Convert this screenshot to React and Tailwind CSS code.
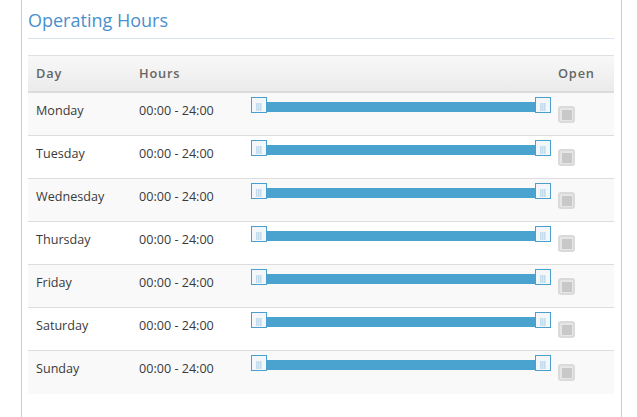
import React from "react";

const days = ["Monday", "Tuesday", "Wednesday", "Thursday", "Friday", "Saturday", "Sunday"];

function Handle() {
  return (
    <div className="w-[16px] h-[16px] shrink-0 border border-[#4a9fcf] bg-[#f4f7fa] flex items-end justify-center pb-[1px]">
      <div className="w-[6px] h-[8px] bg-[repeating-linear-gradient(90deg,#c3dbea_0px,#c3dbea_1px,#d8e7f1_1px,#d8e7f1_2px)]" />
    </div>
  );
}

function Slider() {
  return (
    <div className="flex items-center w-[300px]">
      <Handle />
      <div className="flex-1 h-[10px] bg-[#4aa3cf] mt-[4px]" />
      <Handle />
    </div>
  );
}

function Check() {
  return (
    <div className="w-[17px] h-[17px] rounded-[3px] border-2 border-[#dadada] bg-[#e6e6e6] flex items-center justify-center">
      <div className="w-[10px] h-[10px] bg-[#c8c8c8]" />
    </div>
  );
}

export default function App() {
  return (
    <div className="w-[637px] h-[417px] bg-white overflow-hidden" style={{ fontFamily: "'Open Sans', sans-serif" }}>
      <div className="ml-[21px] w-[601px] h-full border-l border-r border-[#cccccc] pl-[6px] pr-[7px]">
        <div className="pt-[8px] pb-[5px] border-b border-[#d4e3ef]">
          <h2 className="text-[18px] leading-[25px] text-[#4a90cc]">Operating Hours</h2>
        </div>
        <div className="mt-[16px]">
          <div className="flex items-center h-[38px] border-t border-[#e0e0e0] border-b-2 border-b-[#dcdcdc] bg-gradient-to-b from-[#f8f8f8] to-[#ebebeb] text-[12.8px] font-semibold tracking-[0.8px] text-[#666]">
            <div className="w-[111px] pl-[8px]">Day</div>
            <div className="w-[112px]">Hours</div>
            <div className="w-[307px]" />
            <div>Open</div>
          </div>
          {days.map((d, i) => (
            <div
              key={d}
              className={`flex h-[43px] border-b border-[#dddddd] text-[12.6px] text-[#3a3a3a] ${i % 2 === 0 ? "bg-[#f9f9f9]" : "bg-white"} ${i === days.length - 1 ? "border-b-0" : ""}`}
            >
              <div className="w-[111px] pl-[8px] pt-[8px] leading-[20px]">{d}</div>
              <div className="w-[112px] pt-[8px] leading-[20px]">00:00 - 24:00</div>
              <div className="w-[307px] pt-[4px]">
                <Slider />
              </div>
              <div className="pt-[13px]">
                <Check />
              </div>
            </div>
          ))}
        </div>
      </div>
    </div>
  );
}
